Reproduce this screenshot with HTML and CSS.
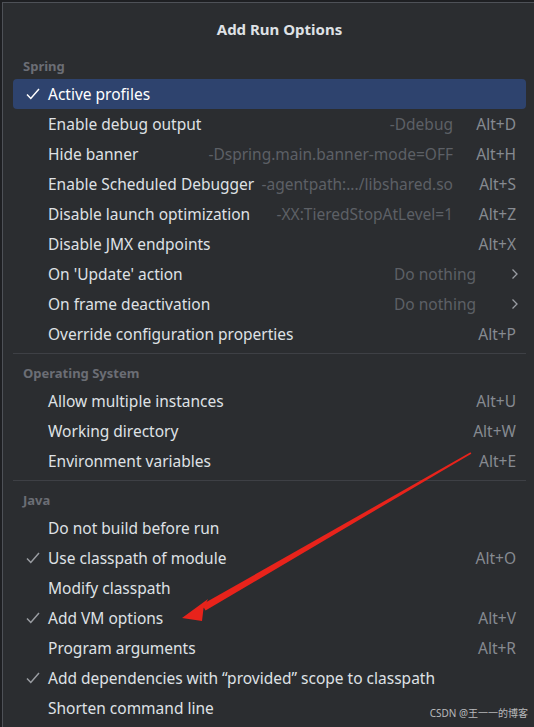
FILE: index.html
```html
<!DOCTYPE html>
<html>
<head>
<meta charset="utf-8">
<link rel="stylesheet" href="styles.css">
</head>
<body>
<div class="dialog">
  <div class="title">Add Run Options</div>
  <div class="list">
    <div class="header">Spring</div>
    <div class="row selected"><svg class="check" width="14" height="12" viewBox="0 0 14 12"><path d="M1 6.5 L4.8 10.5 L13 1" fill="none" stroke="currentColor" stroke-width="1.5"/></svg><span class="label">Active profiles</span></div>
    <div class="row"><span class="label">Enable debug output</span><span class="hint">-Ddebug</span><span class="key">Alt+D</span></div>
    <div class="row"><span class="label">Hide banner</span><span class="hint">-Dspring.main.banner-mode=OFF</span><span class="key">Alt+H</span></div>
    <div class="row"><span class="label">Enable Scheduled Debugger</span><span class="hint">-agentpath:.../libshared.so</span><span class="key">Alt+S</span></div>
    <div class="row"><span class="label">Disable launch optimization</span><span class="hint">-XX:TieredStopAtLevel=1</span><span class="key">Alt+Z</span></div>
    <div class="row"><span class="label">Disable JMX endpoints</span><span class="hint"></span><span class="key">Alt+X</span></div>
    <div class="row"><span class="label">On 'Update' action</span><span class="hint">Do nothing</span><span class="sub"><svg width="8" height="12" viewBox="0 0 8 12"><path d="M1.5 1.5 L6 6 L1.5 10.5" fill="none" stroke="#9a9da3" stroke-width="1.3"/></svg></span></div>
    <div class="row"><span class="label">On frame deactivation</span><span class="hint">Do nothing</span><span class="sub"><svg width="8" height="12" viewBox="0 0 8 12"><path d="M1.5 1.5 L6 6 L1.5 10.5" fill="none" stroke="#9a9da3" stroke-width="1.3"/></svg></span></div>
    <div class="row"><span class="label">Override configuration properties</span><span class="hint"></span><span class="key">Alt+P</span></div>
    <div class="sep"></div>
    <div class="header">Operating System</div>
    <div class="row"><span class="label">Allow multiple instances</span><span class="hint"></span><span class="key">Alt+U</span></div>
    <div class="row"><span class="label">Working directory</span><span class="hint"></span><span class="key">Alt+W</span></div>
    <div class="row"><span class="label">Environment variables</span><span class="hint"></span><span class="key">Alt+E</span></div>
    <div class="sep"></div>
    <div class="header">Java</div>
    <div class="row"><span class="label">Do not build before run</span></div>
    <div class="row"><svg class="check" width="14" height="12" viewBox="0 0 14 12"><path d="M1 6.5 L4.8 10.5 L13 1" fill="none" stroke="currentColor" stroke-width="1.5"/></svg><span class="label">Use classpath of module</span><span class="hint"></span><span class="key">Alt+O</span></div>
    <div class="row"><span class="label">Modify classpath</span></div>
    <div class="row"><svg class="check" width="14" height="12" viewBox="0 0 14 12"><path d="M1 6.5 L4.8 10.5 L13 1" fill="none" stroke="currentColor" stroke-width="1.5"/></svg><span class="label">Add VM options</span><span class="hint"></span><span class="key">Alt+V</span></div>
    <div class="row"><span class="label">Program arguments</span><span class="hint"></span><span class="key">Alt+R</span></div>
    <div class="row"><svg class="check" width="14" height="12" viewBox="0 0 14 12"><path d="M1 6.5 L4.8 10.5 L13 1" fill="none" stroke="currentColor" stroke-width="1.5"/></svg><span class="label">Add dependencies with “provided” scope to classpath</span></div>
    <div class="row"><span class="label">Shorten command line</span></div>
  </div>
</div>
<svg class="arrow" width="534" height="727" viewBox="0 0 534 727">
  <polygon points="470.5,452.3 471.3,453.7 205.5,610.5 202,604.5" fill="#e8231b"/>
  <polygon points="182,618 208,599 203.5,608.5 202,621" fill="#e8231b"/>
</svg>
<div class="watermark">CSDN @王一一的博客</div>
</body>
</html>
```

FILE: styles.css
```css
html, body {
  margin: 0;
  padding: 0;
  background: #1e1f22;
  height: 100%;
  overflow: hidden;
}
body {
  position: relative;
  font-family: "Noto Sans", "Open Sans", sans-serif;
}
.dialog {
  margin: 2px 0 0 2px;
  border-top: 1px solid #4e5157;
  border-left: 1px solid #4e5157;
  background: #2b2d30;
  height: 100%;
  box-sizing: border-box;
}
.title {
  height: 52px;
  display: flex;
  align-items: center;
  justify-content: center;
  padding-left: 22px;
  color: #dfe1e5;
  font-weight: 700;
  font-size: 15px;
}
.list {
  margin-left: 10px;
  width: 513px;
}
.header {
  height: 24px;
  display: flex;
  align-items: center;
  padding-left: 10px;
  color: #6b6e75;
  font-weight: 700;
  font-size: 13px;
  margin-top: -1px;
  margin-bottom: 1px;
}
.row {
  height: 30px;
  display: flex;
  align-items: center;
  padding-left: 35px;
  padding-right: 10px;
  position: relative;
  color: #dfe1e5;
  font-size: 15.5px;
  border-radius: 4px;
}
.row.selected {
  background: #2e436e;
  color: #ffffff;
}
.check {
  position: absolute;
  left: 13px;
  top: 9px;
  color: #9a9da2;
}
.selected .check {
  color: #ffffff;
}
.label {
  flex: 1;
  white-space: nowrap;
}
.hint {
  color: #5d6066;
  white-space: nowrap;
}
.key {
  width: 48px;
  margin-left: 15px;
  text-align: right;
  color: #868a91;
  white-space: nowrap;
}
.sub {
  width: 43px;
  display: flex;
  justify-content: flex-end;
  margin-right: -3px;
}
.sep {
  height: 1px;
  background: #3e4045;
  margin: 4px 0 8px 0;
}
.arrow {
  position: absolute;
  left: 0;
  top: 0;
  pointer-events: none;
}
.watermark {
  position: absolute;
  right: 6px;
  bottom: 7px;
  font-family: "Noto Sans", "Noto Sans CJK SC", sans-serif;
  font-size: 10px;
  color: #b9babc;
}
```
